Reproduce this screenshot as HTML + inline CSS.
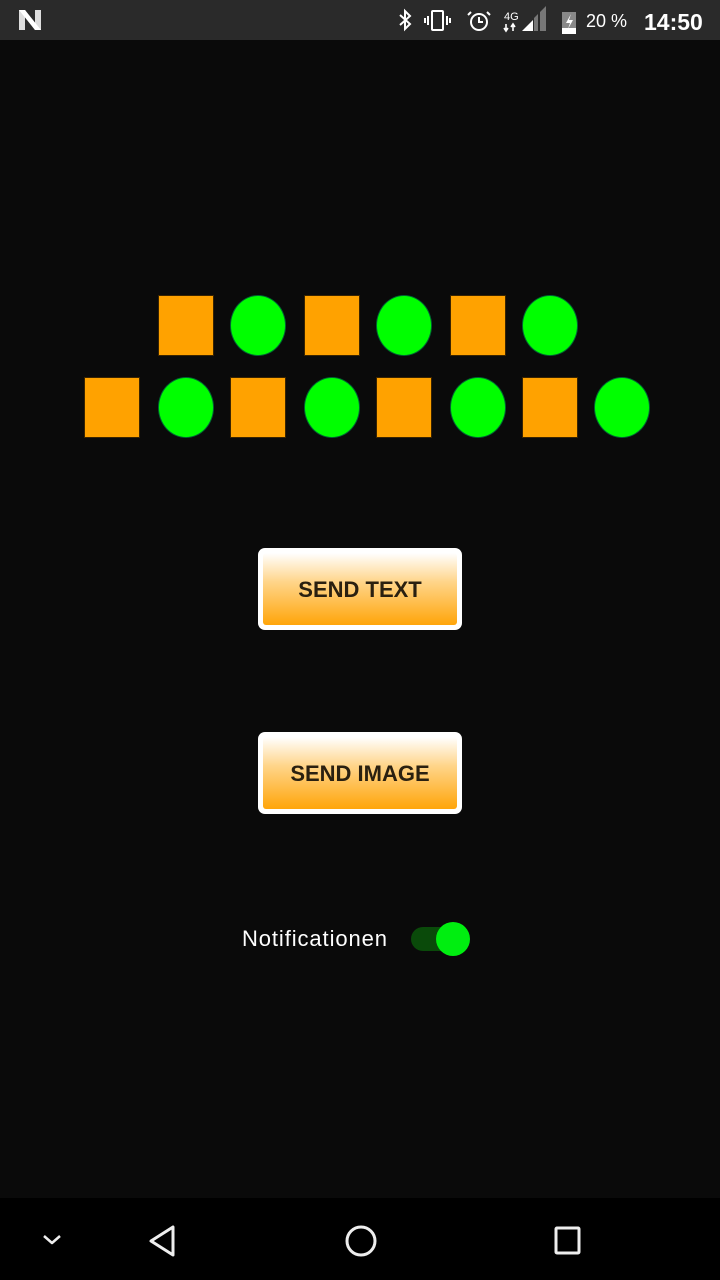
<!DOCTYPE html>
<html><head><meta charset="utf-8"><style>
*{margin:0;padding:0;box-sizing:border-box}
body{width:720px;height:1280px;background:#0a0a0a;position:relative;overflow:hidden;font-family:"Liberation Sans",sans-serif}
.sb{position:absolute;left:0;top:0;width:720px;height:40px;background:#2a2a2a}
.nav{position:absolute;left:0;top:1198px;width:720px;height:82px;background:#000}
.sq{position:absolute;width:56px;height:61px;background:#ffa200;border:1px solid #3a2400}
.ci{position:absolute;width:56px;height:61px;background:#00ff00;border:1px solid #063;border-radius:50%}
.btn{position:absolute;left:258px;width:204px;height:82px;background:#fff;border-radius:7px;padding:5px}
.btn div{width:100%;height:100%;border-radius:3px;background:linear-gradient(#fff 0%,#ffd58a 40%,#ffa50a 100%);display:flex;align-items:center;justify-content:center;font-weight:bold;font-size:22px;color:#2a2010;padding-top:2px}
</style></head><body>
<div class="sb">
<svg width="720" height="40" style="position:absolute;left:0;top:0">
<path d="M19 10 h6 l10 14 v-14 h6 v20 h-6 l-10 -14 v14 h-6z" fill="#ddd"/>
<path d="M19 10 h6 l16 20 h-6z" fill="#fff"/>
<g stroke="#fff" stroke-width="2" fill="none">
<path d="M400 15 l10 9 l-5 5 v-18 l5 5 l-10 9"/>
<rect x="432" y="11" width="11" height="19" rx="1"/>
<path d="M428 16v9M447 16v9M425 18v5M450 18v5"/>
<circle cx="479" cy="22" r="8"/><path d="M479 17v5h4M471 12l-3 3M487 12l3 3"/>
</g>
<text x="504" y="20" fill="#fff" font-size="11" font-family="Liberation Sans">4G</text>
<path d="M506 24v7M504 28l2 3 2-3M513 31v-7M511 27l2-3 2 3" stroke="#fff" stroke-width="1.6" fill="none"/>
<path d="M522 31 L533 20 V31Z" fill="#fff"/><path d="M534 31V18l4-4v17zM540 31V12l6-6v25z" fill="#777"/>
<rect x="562" y="12" width="14" height="22" fill="#888"/><rect x="562" y="28" width="14" height="6" fill="#fff"/>
<path d="M571 14 l-5 9 h4 l-2 6 l5 -9 h-4z" fill="#fff"/>
<text x="586" y="27" fill="#fff" font-size="18" font-family="Liberation Sans">20 %</text>
<text x="644" y="30" fill="#fff" font-size="23" font-weight="bold" font-family="Liberation Sans">14:50</text>
</svg>
</div>
<div class="sq" style="left:158px;top:295px"></div>
<div class="ci" style="left:230px;top:295px"></div>
<div class="sq" style="left:304px;top:295px"></div>
<div class="ci" style="left:376px;top:295px"></div>
<div class="sq" style="left:450px;top:295px"></div>
<div class="ci" style="left:522px;top:295px"></div>
<div class="sq" style="left:84px;top:377px"></div>
<div class="ci" style="left:158px;top:377px"></div>
<div class="sq" style="left:230px;top:377px"></div>
<div class="ci" style="left:304px;top:377px"></div>
<div class="sq" style="left:376px;top:377px"></div>
<div class="ci" style="left:450px;top:377px"></div>
<div class="sq" style="left:522px;top:377px"></div>
<div class="ci" style="left:594px;top:377px"></div>
<div class="btn" style="top:548px"><div>SEND TEXT</div></div>
<div class="btn" style="top:732px"><div>SEND IMAGE</div></div>
<div style="position:absolute;left:242px;top:926px;color:#fff;font-size:22px;letter-spacing:0.9px">Notificationen</div>
<div style="position:absolute;left:411px;top:927px;width:52px;height:24px;border-radius:12px;background:#0a4a0a"></div>
<div style="position:absolute;left:436px;top:922px;width:34px;height:34px;border-radius:50%;background:#00ee10"></div>
<div class="nav">
<svg width="720" height="82" style="position:absolute;left:0;top:0">
<g stroke="#eee" stroke-width="3" fill="none" stroke-linejoin="round">
<path d="M44 38 l8 7 l8 -7" stroke-width="2.5"/>
<path d="M173 29 v28 l-22 -14z"/>
<ellipse cx="361" cy="43" rx="14" ry="14"/>
<rect x="556" y="30" width="23" height="25" rx="1"/>
</g></svg>
</div>
</body></html>
